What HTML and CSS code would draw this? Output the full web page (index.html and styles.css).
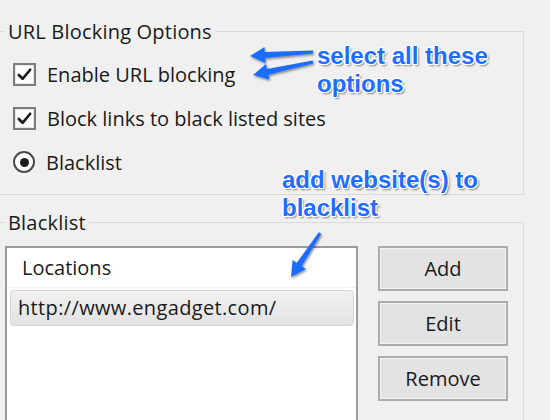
FILE: index.html
```html
<!DOCTYPE html>
<html>
<head>
<meta charset="utf-8">
<link rel="stylesheet" href="styles.css">
</head>
<body>
<div class="page">
  <fieldset class="group group-options">
    <legend>URL Blocking Options</legend>
    <div class="opt-row">
      <span class="checkbox"><svg viewBox="0 0 20 20" width="19" height="19"><path d="M4 10.5 L8 14.5 L16 5" fill="none" stroke="#1b1b1b" stroke-width="2.8" stroke-linecap="round" stroke-linejoin="round"/></svg></span>
      <span class="opt-label">Enable URL blocking</span>
    </div>
    <div class="opt-row">
      <span class="checkbox"><svg viewBox="0 0 20 20" width="19" height="19"><path d="M4 10.5 L8 14.5 L16 5" fill="none" stroke="#1b1b1b" stroke-width="2.8" stroke-linecap="round" stroke-linejoin="round"/></svg></span>
      <span class="opt-label">Block links to black listed sites</span>
    </div>
    <div class="opt-row">
      <span class="radio"><span class="radio-dot"></span></span>
      <span class="opt-label">Blacklist</span>
    </div>
  </fieldset>

  <fieldset class="group group-list">
    <legend>Blacklist</legend>
    <div class="list-area">
      <div class="listbox">
        <div class="list-header">Locations</div>
        <div class="list-item">http://www.engadget.com/</div>
      </div>
      <div class="buttons">
        <button class="btn">Add</button>
        <button class="btn">Edit</button>
        <button class="btn">Remove</button>
      </div>
    </div>
  </fieldset>

  <div class="note note-select">select all these<br>options</div>
  <div class="note note-add">add website(s) to<br>blacklist</div>

  <svg class="arrows" width="550" height="420" viewBox="0 0 550 420">
    <defs>
      <filter id="sh" x="-20%" y="-20%" width="140%" height="140%">
        <feDropShadow dx="1" dy="1.5" stdDeviation="1" flood-color="#000" flood-opacity="0.45"/>
      </filter>
    </defs>
    <g fill="#1f6dff" filter="url(#sh)">
      <polygon points="312.9,50.5 264.8,52.05 264.5,47.1 250,56 265.5,63 265.2,58.05 313.1,53.5"/>
      <polygon points="312.7,60.5 267,68.9 266,64 253,75 269.4,79.6 268.3,74.8 313.3,63.5"/>
      <polygon points="318.8,232.2 296.8,262.8 292.6,260.1 291,277 305.9,268.9 301.8,266.1 321.3,233.8"/>
    </g>
  </svg>
</div>
</body>
</html>
```

FILE: styles.css
```css
html, body {
  margin: 0;
  padding: 0;
  background: #f0f0f0;
  width: 550px;
  height: 420px;
  overflow: hidden;
}

.page {
  position: relative;
  width: 550px;
  height: 420px;
  overflow: hidden;
  padding-top: 18px;
  box-sizing: border-box;
  font-family: "Open Sans", "Noto Sans", sans-serif;
  font-size: 20px;
  color: #1a1a1a;
}

.group {
  margin: 0 26px 0 -2px;
  border: 1px solid #dadada;
  padding: 0 14px 0 6px;
  min-width: 0;
}

.group legend {
  padding: 0 3px;
  line-height: 27px;
  font-size: 20px;
  letter-spacing: 0.2px;
}

.group-options {
  padding-top: 7px;
  padding-bottom: 10px;
}

.opt-row {
  height: 44px;
  display: flex;
  align-items: center;
  padding-left: 8px;
}

.checkbox {
  width: 19px;
  height: 19px;
  border: 2px solid #7d7d7d;
  background: #fff;
  box-shadow: inset 0 0 0 1px #e6e6e6;
  display: flex;
  align-items: center;
  justify-content: center;
  margin-right: 11px;
}

.radio {
  width: 18px;
  height: 18px;
  border: 2px solid #4a4a4a;
  border-radius: 50%;
  background: #fff;
  display: flex;
  align-items: center;
  justify-content: center;
  margin-right: 11px;
}

.radio-dot {
  width: 9px;
  height: 9px;
  border-radius: 50%;
  background: #1d1d1d;
}

.group-list {
  margin-top: 14px;
  padding-top: 10px;
  height: 230px;
}

.list-area {
  display: flex;
  align-items: flex-start;
  gap: 20px;
}

.listbox {
  width: 349px;
  height: 200px;
  border: 2px solid #9b9b9b;
  background: #fff;
  box-sizing: content-box;
}

.list-header {
  height: 39px;
  line-height: 39px;
  padding-left: 15px;
  border-bottom: 1px solid #eef1f5;
}

.list-item {
  margin: 2px 2px 0 3px;
  height: 34px;
  line-height: 34px;
  padding-left: 7px;
  border: 1px solid #d6d6d6;
  border-radius: 4px;
  background: linear-gradient(#f1f1f1, #e3e3e3);
  letter-spacing: 0.35px;
}

.buttons {
  display: flex;
  flex-direction: column;
  gap: 10px;
}

.btn {
  width: 130px;
  height: 45px;
  border: 2px solid #acacac;
  background: #e3e3e3;
  box-shadow: inset 0 0 0 1px #f4f4f4;
  font-family: inherit;
  font-size: 20px;
  color: #1a1a1a;
  padding: 0;
}

.note {
  position: absolute;
  font-family: "Liberation Sans", Arial, sans-serif;
  font-weight: bold;
  font-size: 24px;
  line-height: 28px;
  color: #1f6dff;
  text-shadow:
    -1px -1px 0 #fff, 1px -1px 0 #fff, -1px 1px 0 #fff, 1px 1px 0 #fff,
    0 -1px 0 #fff, 0 1px 0 #fff, -1px 0 0 #fff, 1px 0 0 #fff,
    2px 2px 2px rgba(0,0,0,0.45);
}

.note-select {
  left: 317px;
  top: 42px;
}

.note-add {
  left: 282px;
  top: 166px;
}

.arrows {
  position: absolute;
  left: 0;
  top: 0;
  pointer-events: none;
}
```
